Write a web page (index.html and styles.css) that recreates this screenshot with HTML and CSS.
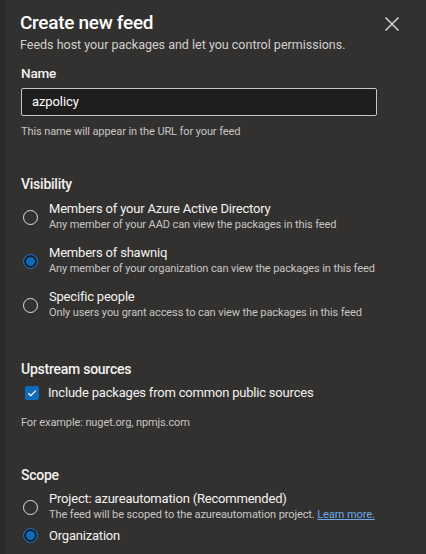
FILE: index.html
```html
<!DOCTYPE html>
<html>
<head>
<meta charset="utf-8">
<link rel="stylesheet" href="styles.css">
</head>
<body>
<div class="page">
  <div class="backdrop"></div>
  <div class="panel">
    <div class="header">
      <div class="titles">
        <h1 class="title">Create new feed</h1>
        <div class="subtitle">Feeds host your packages and let you control permissions.</div>
      </div>
      <button class="close" aria-label="Close">
        <svg width="16" height="16" viewBox="0 0 16 16"><path d="M1.5 1.5 L14.5 14.5 M14.5 1.5 L1.5 14.5" stroke="#d6d6d6" stroke-width="1.5" fill="none"/></svg>
      </button>
    </div>

    <div class="field">
      <div class="label">Name</div>
      <div class="input">azpolicy</div>
      <div class="hint">This name will appear in the URL for your feed</div>
    </div>

    <div class="section vis">
      <div class="section-title">Visibility</div>
      <div class="options">
        <div class="option">
          <span class="radio"></span>
          <div class="opt-text">
            <div class="opt-title">Members of your Azure Active Directory</div>
            <div class="opt-desc">Any member of your AAD can view the packages in this feed</div>
          </div>
        </div>
        <div class="option">
          <span class="radio checked"></span>
          <div class="opt-text">
            <div class="opt-title">Members of shawniq</div>
            <div class="opt-desc">Any member of your organization can view the packages in this feed</div>
          </div>
        </div>
        <div class="option">
          <span class="radio"></span>
          <div class="opt-text">
            <div class="opt-title">Specific people</div>
            <div class="opt-desc">Only users you grant access to can view the packages in this feed</div>
          </div>
        </div>
      </div>
    </div>

    <div class="section upstream">
      <div class="section-title">Upstream sources</div>
      <div class="check-row">
        <span class="checkbox">
          <svg width="14" height="14" viewBox="0 0 14 14"><path d="M3.3 7.2 L5.8 9.6 L10.8 4.6" stroke="#ffffff" stroke-width="1.3" fill="none"/></svg>
        </span>
        <span class="check-label">Include packages from common public sources</span>
      </div>
      <div class="hint example">For example: nuget.org, npmjs.com</div>
    </div>

    <div class="section scope">
      <div class="section-title">Scope</div>
      <div class="options scope-options">
        <div class="option">
          <span class="radio"></span>
          <div class="opt-text">
            <div class="opt-title">Project: azureautomation (Recommended)</div>
            <div class="opt-desc">The feed will be scoped to the azureautomation project. <a class="link" href="#">Learn more.</a></div>
          </div>
        </div>
        <div class="option single">
          <span class="radio checked"></span>
          <div class="opt-text">
            <div class="opt-title">Organization</div>
          </div>
        </div>
      </div>
    </div>
  </div>
</div>
</body>
</html>
```

FILE: styles.css
```css
* { box-sizing: border-box; }
html, body { margin: 0; padding: 0; }
body {
  background: #323130;
  font-family: Roboto, "Open Sans", sans-serif;
  color: #f3f2f1;
  overflow: hidden;
}
.page {
  display: flex;
  width: 426px;
  height: 554px;
}
.backdrop {
  width: 5px;
  background: #2a2928;
  flex: none;
}
.panel {
  flex: 1;
  background: #323130;
  padding: 9px 0 0 15px;
  display: flex;
  flex-direction: column;
}
.header {
  display: flex;
  justify-content: space-between;
  align-items: flex-start;
}
.title {
  margin: 0;
  font-size: 19px;
  font-weight: 500;
  line-height: 28px;
  letter-spacing: -0.3px;
  color: #ffffff;
}
.subtitle {
  font-size: 12.5px;
  line-height: 16px;
  color: #d2d0ce;
}
.close {
  background: none;
  border: 0;
  padding: 0;
  margin: 7px 26px 0 0;
  width: 16px;
  height: 16px;
  display: flex;
}
.field { margin-top: 11px; padding-left: 1px; }
.label {
  font-size: 13.5px;
  font-weight: 500;
  line-height: 18px;
  letter-spacing: -0.2px;
  color: #f3f2f1;
}
.input {
  margin-top: 6px;
  width: 356px;
  height: 28px;
  border: 1px solid #c8c6c4;
  border-radius: 2px;
  background: #1f1e1d;
  font-size: 13px;
  letter-spacing: -0.1px;
  line-height: 26px;
  padding-left: 10px;
  color: #ffffff;
}
.hint {
  font-size: 11px;
  letter-spacing: -0.1px;
  line-height: 14px;
  color: #c8c6c4;
  margin-top: 9px;
}
.section { padding-left: 1px; }
.vis { margin-top: 36px; }
.section-title {
  font-size: 14px;
  font-weight: 500;
  line-height: 18px;
  letter-spacing: -0.25px;
  color: #f3f2f1;
}
.options {
  display: flex;
  flex-direction: column;
  gap: 12px;
  margin-top: 7px;
}
.option {
  display: flex;
  align-items: center;
  gap: 11px;
}
.radio {
  flex: none;
  width: 15px;
  height: 15px;
  border-radius: 50%;
  border: 1px solid #e1dfdd;
  margin-left: 2px;
  margin-top: 3px;
}
.radio.checked {
  border-color: #1c6ec4;
  box-shadow: inset 0 0 0 2px #1c1b1a;
  background: #0f6cbd;
}
.opt-text { display: flex; flex-direction: column; }
.opt-title {
  font-size: 13px;
  letter-spacing: -0.2px;
  line-height: 17px;
  color: #f3f2f1;
}
.opt-desc {
  font-size: 11px;
  letter-spacing: -0.1px;
  line-height: 15px;
  color: #c8c6c4;
}
.upstream { margin-top: 40px; }
.check-row {
  display: flex;
  align-items: center;
  gap: 9px;
  margin-top: 6px;
  padding-left: 4px;
}
.checkbox {
  flex: none;
  width: 14px;
  height: 14px;
  background: #0f6cbd;
  border-radius: 2px;
  display: flex;
}
.check-label {
  font-size: 13px;
  letter-spacing: -0.2px;
  line-height: 18px;
  color: #f3f2f1;
}
.example { margin-top: 14px; }
.scope { margin-top: 36px; }
.scope-options { gap: 5px; margin-top: 6px; }
.link {
  color: #6ea6e8;
  text-decoration: underline;
}
.single .radio { margin-top: 0; }
```
